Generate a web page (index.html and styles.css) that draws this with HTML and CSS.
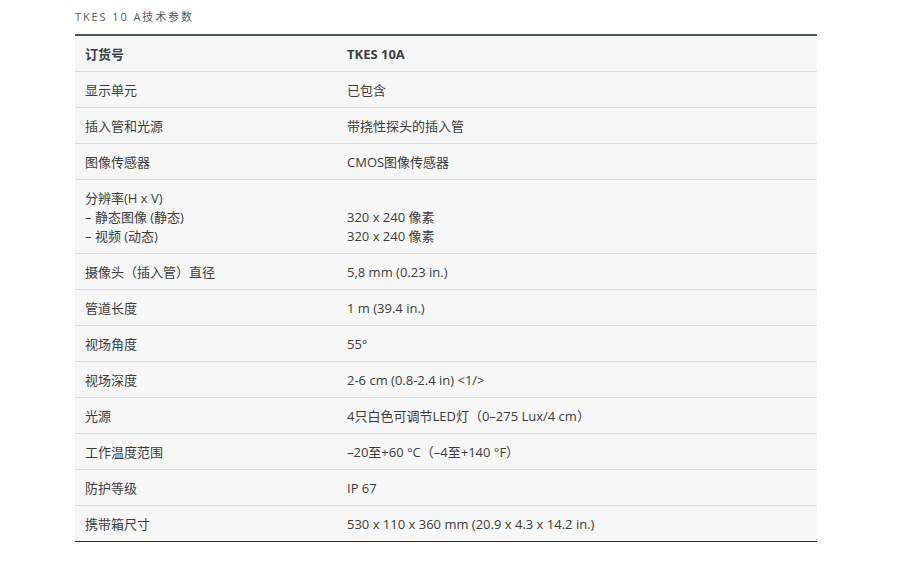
FILE: index.html
```html
<!DOCTYPE html>
<html lang="zh-CN">
<head>
<meta charset="utf-8">
<title>TKES 10 A技术参数</title>
<link rel="stylesheet" href="styles.css">
</head>
<body>
<div class="wrap">
  <h2 class="title">TKES 10 A技术参数</h2>
  <table class="spec">
    <thead>
      <tr><th>订货号</th><th>TKES 10A</th></tr>
    </thead>
    <tbody>
      <tr><td>显示单元</td><td>已包含</td></tr>
      <tr><td>插入管和光源</td><td>带挠性探头的插入管</td></tr>
      <tr><td>图像传感器</td><td>CMOS图像传感器</td></tr>
      <tr><td>分辨率(H x V)<br>– 静态图像 (静态)<br>– 视频 (动态)</td><td><br>320 x 240 像素<br>320 x 240 像素</td></tr>
      <tr><td>摄像头（插入管）直径</td><td>5,8 mm (0.23 in.)</td></tr>
      <tr><td>管道长度</td><td>1 m (39.4 in.)</td></tr>
      <tr><td>视场角度</td><td>55°</td></tr>
      <tr><td>视场深度</td><td>2-6 cm (0.8-2.4 in) &lt;1/&gt;</td></tr>
      <tr><td>光源</td><td>4只白色可调节LED灯（0–275 Lux/4 cm）</td></tr>
      <tr><td>工作温度范围</td><td>–20至+60 °C（–4至+140 °F）</td></tr>
      <tr><td>防护等级</td><td>IP 67</td></tr>
      <tr><td>携带箱尺寸</td><td>530 x 110 x 360 mm (20.9 x 4.3 x 14.2 in.)</td></tr>
    </tbody>
  </table>
</div>
</body>
</html>
```

FILE: styles.css
```css
html, body {
  margin: 0;
  padding: 0;
  background: #ffffff;
}

body {
  font-family: "Open Sans", "Noto Sans CJK SC", sans-serif;
  color: #3c3c3c;
}

.wrap {
  width: 742px;
  padding: 9px 0 0 75px;
}

.title {
  margin: 0 0 9px 0;
  font-size: 11px;
  line-height: 16px;
  font-weight: normal;
  letter-spacing: 1.9px;
  color: #555b60;
}

.spec {
  width: 742px;
  border-collapse: collapse;
  background: #f7f7f7;
  border-top: 2px solid #4a555c;
  border-bottom: 1px solid #2e2e2e;
  font-size: 13px;
  line-height: 19px;
}

.spec th,
.spec td {
  text-align: left;
  vertical-align: top;
  padding: 9px 10px 7px 10px;
}

.spec th:first-child,
.spec td:first-child {
  width: 242px;
}

.spec th {
  font-weight: 700;
  color: #3a3f44;
}

.spec tbody tr {
  border-top: 1px solid #dedede;
}
```
